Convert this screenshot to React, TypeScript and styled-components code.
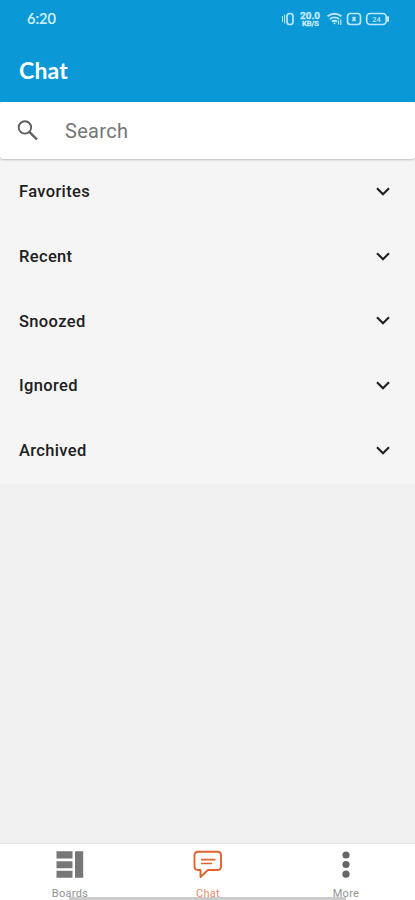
import React from "react";
import styled, { createGlobalStyle } from "styled-components";

const GlobalStyle = createGlobalStyle`
  * { box-sizing: border-box; }
  body { margin: 0; background: #f0f0f0; font-family: Roboto, sans-serif; }
`;

const Screen = styled.div`
  display: flex;
  flex-direction: column;
  width: 100%;
  height: 900px;
  overflow: hidden;
  background: #f0f0f0;
`;

const Header = styled.header`
  flex: none;
  height: 102px;
  background: #0a98d6;
  color: #fff;
`;

const StatusBar = styled.div`
  display: flex;
  align-items: center;
  justify-content: space-between;
  height: 38px;
  padding: 0 26px 0 27px;
`;

const Clock = styled.span`
  font: 500 14.5px/18px Lato, sans-serif;
  color: #d8f1fc;
  -webkit-text-stroke: 0.2px #d8f1fc;
`;

const StatusIcons = styled.svg`
  display: block;
  width: 108px;
  height: 20px;
`;

const Title = styled.h1`
  margin: 0;
  padding: 17px 19px 0;
  font: 700 23px/30px Lato, sans-serif;
  letter-spacing: 0.2px;
`;

const SearchBar = styled.label`
  flex: none;
  display: flex;
  align-items: center;
  gap: 27px;
  height: 57px;
  padding: 0 17px;
  background: #fff;
  border-radius: 3px;
  box-shadow: 0 1px 2px rgba(0, 0, 0, 0.22);
  z-index: 1;
`;

const SearchIcon = styled.svg`
  width: 21px;
  height: 21px;
  fill: none;
  stroke: #606060;
  stroke-width: 1.9;
`;

const SearchInput = styled.input`
  flex: 1;
  min-width: 0;
  padding: 0;
  border: 0;
  outline: 0;
  background: transparent;
  font: 400 20px/24px Roboto, sans-serif;
  letter-spacing: 0.3px;
  &::placeholder { color: #757575; opacity: 1; }
`;

const Sections = styled.main`
  flex: none;
  height: 325px;
  padding-bottom: 1.5px;
  display: grid;
  grid-template-rows: repeat(5, 1fr);
  background: #f5f5f5;
`;

const SectionRow = styled.div`
  display: flex;
  align-items: center;
  justify-content: space-between;
  padding: 0 25px 0 19px;
  font: 500 16.5px/20px Roboto, sans-serif;
  letter-spacing: 0.35px;
  color: #202020;
`;

const SectionName = styled.span`
  padding-top: 2px;
`;

const Chevron = styled.svg`
  width: 14px;
  height: 9px;
  fill: none;
  stroke: #202020;
  stroke-width: 2.1;
`;

const Spacer = styled.div`
  flex: 1;
`;

const TabBar = styled.nav`
  position: relative;
  flex: none;
  display: grid;
  grid-template-columns: repeat(3, 1fr);
  height: 57px;
  padding-left: 1px;
  border-top: 1px solid #e4e4e4;
  background: #fff;
`;

const Tab = styled.div<{ $active?: boolean }>`
  display: flex;
  flex-direction: column;
  align-items: center;
  padding-top: 6px;
  color: ${(p) => (p.$active ? "#e2622d" : "#777")};
`;

const TabIcon = styled.svg`
  width: 30px;
  height: 30px;
`;

const TabLabel = styled.span<{ $active?: boolean }>`
  margin-top: 7px;
  font: 400 11px/14px Roboto, sans-serif;
  letter-spacing: 0.3px;
  color: ${(p) => (p.$active ? "#e88c68" : "#929292")};
`;

const HomeIndicator = styled.div`
  position: absolute;
  left: 69px;
  bottom: 0;
  width: 277px;
  height: 3px;
  background: #cbcbcb;
`;

const sections = ["Favorites", "Recent", "Snoozed", "Ignored", "Archived"];

export default function App() {
  return (
    <Screen>
      <GlobalStyle />
      <Header>
        <StatusBar>
          <Clock>6:20</Clock>
          <StatusIcons viewBox="281 9 108 20" fill="none" stroke="#bfe7f9" strokeWidth="1.7">
            <path d="M282.5 16v6M284.6 14.5v9" strokeWidth="1" />
            <rect x="287" y="13.5" width="6" height="11" rx="2.8" />
            <g fill="#c8ebfa" stroke="#c8ebfa" strokeWidth="0.3" fontFamily="Roboto" fontWeight="700" textAnchor="middle">
              <text x="310" y="18.6" fontSize="9.5" textLength="20" lengthAdjust="spacingAndGlyphs">20.0</text>
              <text x="310.5" y="26" fontSize="7.5" textLength="17" lengthAdjust="spacingAndGlyphs">KB/S</text>
            </g>
            <path d="M327.5 16.2q7-5 14 0M329.8 19q4.700-3.300 9.400 0M332 21.600q2.500-1.700 5 0" strokeWidth="1.900" />
            <path d="M334.500 23.300h.2" strokeLinecap="round" />
            <path d="M338.500 20.500v4M340.800 19.500v5.500" strokeWidth="1.200" />
            <rect x="347.500" y="13.500" width="13" height="11" rx="3" />
            <path d="m352.500 17 3 4m0-4-3 4" strokeWidth="1.700" />
            <rect x="366.700" y="13.500" width="19.500" height="11" rx="3.500" />
            <path d="M388 17v4" strokeWidth="2" strokeLinecap="round" />
            <text x="376.500" y="21.800" fontSize="7.500" fontWeight="500" fill="#bfe7f9" stroke="none" fontFamily="Roboto" textAnchor="middle">24</text>
          </StatusIcons>
        </StatusBar>
        <Title>Chat</Title>
      </Header>
      <SearchBar>
        <SearchIcon viewBox="0 0 21 21">
          <circle cx="7.9" cy="7.4" r="6.2" />
          <path d="m12.300 11.800 7.700 7.700" strokeWidth="2.400" />
        </SearchIcon>
        <SearchInput placeholder="Search" />
      </SearchBar>
      <Sections>
        {sections.map((name) => (
          <SectionRow key={name}>
            <SectionName>{name}</SectionName>
            <Chevron viewBox="0 0 14 9">
              <path d="m1 1.2 6 6 6-6" />
            </Chevron>
          </SectionRow>
        ))}
      </Sections>
      <Spacer />
      <TabBar>
        <Tab>
          <TabIcon viewBox="0 0 30 30" fill="currentColor">
            <path d="M1.500 1.300h16v7.200h-16zM1.500 11.200h16v7h-16zM1.500 20.800h16v7h-16zM20 1.300h8.200v26.500h-8.200z" />
          </TabIcon>
          <TabLabel>Boards</TabLabel>
        </Tab>
        <Tab $active>
          <TabIcon viewBox="0 0 30 30" fill="none" stroke="currentColor" strokeWidth="1.9" strokeLinejoin="round">
            <path d="M5 1.800h19.500q3.500 0 3.500 3.500v11.200q0 3.500-3.500 3.500h-9.500l-7.500 7v-7H5q-3.500 0-3.500-3.500v-11.200Q1.500 1.800 5 1.800z" />
            <path d="M8 9.600h14.500M8 13.500h11" strokeWidth="1.700" />
          </TabIcon>
          <TabLabel $active>Chat</TabLabel>
        </Tab>
        <Tab>
          <TabIcon viewBox="0 0 30 30" fill="#666">
            <circle cx="15" cy="5" r="3.600" />
            <circle cx="15" cy="14.500" r="3.600" />
            <circle cx="15" cy="24.200" r="3.600" />
          </TabIcon>
          <TabLabel>More</TabLabel>
        </Tab>
        <HomeIndicator />
      </TabBar>
    </Screen>
  );
}
